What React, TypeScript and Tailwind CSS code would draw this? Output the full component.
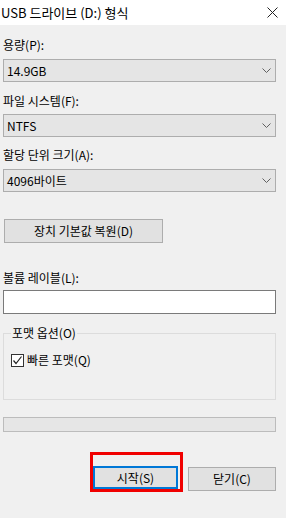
import { ReactNode } from 'react';

function Chevron() {
  return (
    <svg width="9" height="5" viewBox="0 0 9 5" className="shrink-0">
      <polyline points="0.5,0.5 4.5,4.5 8.5,0.5" fill="none" stroke="#606060" strokeWidth="1" />
    </svg>
  );
}

function Label({ children, className = '' }: { children: ReactNode; className?: string }) {
  return <div className={`h-[16px] leading-[16px] ${className}`}>{children}</div>;
}

function Select({ value, className = '' }: { value: string; className?: string }) {
  return (
    <div
      className={`flex h-[23px] items-center justify-between border border-[#adadad] bg-[#e5e5e5] pl-[3px] pr-[4px] ${className}`}
    >
      <span className="leading-[16px]">{value}</span>
      <Chevron />
    </div>
  );
}

export default function App() {
  return (
    <div className="h-[518px] w-[286px] overflow-hidden bg-[#f0f0f0] font-['Noto_Sans_CJK_KR','Noto_Sans',sans-serif] text-[12px] text-black">
      <div className="flex h-[25px] items-center justify-between bg-white pl-[1px] pr-[8px]">
        <span className="text-[13px] leading-[16px]">USB 드라이브 (D:) 형식</span>
        <svg width="11" height="11" viewBox="0 0 11 11">
          <path d="M0.5 0.5 L10.5 10.5 M10.5 0.5 L0.5 10.5" stroke="#222" strokeWidth="1" />
        </svg>
      </div>

      <div className="flex flex-col pl-[3px] pr-[10px]">
        <Label className="mt-[12px]">용량(P):</Label>
        <Select className="mt-[6px]" value="14.9GB" />

        <Label className="mt-[11px]">파일 시스템(F):</Label>
        <Select className="mt-[5px]" value="NTFS" />

        <Label className="mt-[10px]">할당 단위 크기(A):</Label>
        <Select className="mt-[6px]" value="4096바이트" />

        <button
          type="button"
          className="ml-[1px] mt-[27px] h-[24px] w-[159px] border border-[#adadad] bg-[#e1e1e1] leading-[16px]"
        >
          장치 기본값 복원(D)
        </button>

        <Label className="mt-[27px]">볼륨 레이블(L):</Label>
        <div className="mt-[4px] h-[24px] border border-[#7a7a7a] bg-white" />

        <div className="relative mt-[19px] h-[67px] border border-[#dcdcdc]">
          <span className="absolute -top-[9px] left-[7px] bg-[#f0f0f0] px-[1px] leading-[16px]">
            포맷 옵션(O)
          </span>
          <div className="ml-[7px] mt-[18px] flex items-center gap-[3px]">
            <span className="flex h-[13px] w-[13px] items-center justify-center border border-[#333] bg-white">
              <svg width="11" height="11" viewBox="0 0 11 11">
                <polyline points="1.5,5.5 4,8.5 9.5,1.5" fill="none" stroke="#222" strokeWidth="1.2" />
              </svg>
            </span>
            <span className="leading-[16px]">빠른 포맷(Q)</span>
          </div>
        </div>

        <div className="mt-[17px] h-[15px] border border-[#bcbcbc] bg-[#e6e6e6]" />

        <div className="mt-[20px] flex items-end justify-end">
          <div className="flex h-[40px] w-[93px] items-end border-[3px] border-[#f00000]">
            <button
              type="button"
              className="h-[23px] w-[85px] border-2 border-[#0078d7] bg-[#e1e1e1] leading-[16px]"
            >
              시작(S)
            </button>
          </div>
          <button
            type="button"
            className="mb-[1px] ml-[5px] h-[24px] w-[88px] border border-[#adadad] bg-[#e1e1e1] leading-[16px]"
          >
            닫기(C)
          </button>
        </div>
      </div>
    </div>
  );
}
